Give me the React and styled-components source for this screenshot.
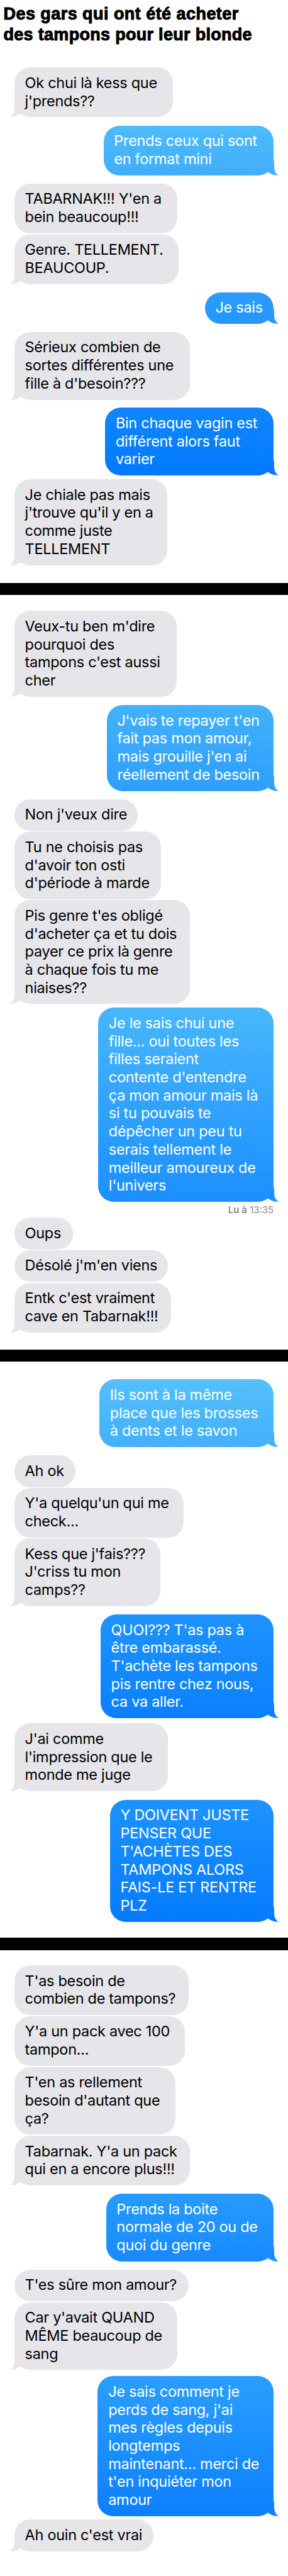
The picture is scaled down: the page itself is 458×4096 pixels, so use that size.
import React from "react";
import styled, { createGlobalStyle } from "styled-components";

const LINE = 28.7;
const PADDING_Y = 21.7;
const GREY = "#e5e5ea";

const conversations = [
  [
    { gap: 0, width: 252.4, tail: true, lines: ["Ok chui là kess que", "j'prends??"] },
    { gap: 13.2, width: 270.7, mine: ["#4dbbfc", "#41aefd"], lines: ["Prends ceux qui sont", "en format mini"] },
    { gap: 13.2, width: 259.7, lines: ["TABARNAK!!! Y'en a", "bein beaucoup!!!"] },
    { gap: 1.8, width: 261.1, tail: true, lines: ["Genre. TELLEMENT.", "BEAUCOUP."] },
    { gap: 13, width: 109.5, mine: ["#2b9dfd", "#2597fd"], lines: ["Je sais"] },
    { gap: 12.6, width: 279.5, tail: true, lines: ["Sérieux combien de", "sortes différentes une", "fille à d'besoin???"] },
    { gap: 12.8, width: 268.1, mine: ["#1186ff", "#027aff"], lines: ["Bin chaque vagin est", "différent alors faut", "varier"] },
    { gap: 5.8, width: 243.3, tail: true, lines: ["Je chiale pas mais", "j'trouve qu'il y en a", "comme juste", "TELLEMENT"] },
  ],
  [
    { gap: 24.9, width: 258.5, tail: true, lines: ["Veux-tu ben m'dire", "pourquoi des", "tampons c'est aussi", "cher"] },
    { gap: 13.3, width: 265.5, mine: ["#43b1fd", "#2d9ffd"], lines: ["J'vais te repayer t'en", "fait pas mon amour,", "mais grouille j'en ai", "réellement de besoin"] },
    { gap: 13.1, width: 196, lines: ["Non j'veux dire"] },
    { gap: 1.2, width: 233.4, lines: ["Tu ne choisis pas", "d'avoir ton osti", "d'période à marde"] },
    { gap: 1.2, width: 279.5, tail: true, lines: ["Pis genre t'es obligé", "d'acheter ça et tu dois", "payer ce prix là genre", "à chaque fois tu me", "niaises??"] },
    {
      gap: 6,
      width: 279.2,
      mine: ["#48b7fd", "#1b8fff"],
      read: "13:35",
      lines: [
        "Je le sais chui une",
        "fille... oui toutes les",
        "filles seraient",
        "contente d'entendre",
        "ça mon amour mais là",
        "si tu pouvais te",
        "dépêcher un peu tu",
        "serais tellement le",
        "meilleur amoureux de",
        "l'univers",
      ],
    },
    { gap: 0, width: 93.2, lines: ["Oups"] },
    { gap: 1.2, width: 244.2, lines: ["Désolé j'm'en viens"] },
    { gap: 1.3, width: 249.7, tail: true, lines: ["Entk c'est vraiment", "cave en Tabarnak!!!"] },
  ],
  [
    { gap: 28.7, width: 277.2, mine: ["#54c0fc", "#42b0fd"], lines: ["Ils sont à la même", "place que les brosses", "à dents et le savon"] },
    { gap: 13, width: 97.2, lines: ["Ah ok"] },
    { gap: 1.2, width: 269.3, lines: ["Y'a quelqu'un qui me", "check..."] },
    { gap: 1.3, width: 231.9, tail: true, lines: ["Kess que j'fais???", "J'criss tu mon", "camps??"] },
    { gap: 13, width: 275.4, mine: ["#1e93ff", "#0a80ff"], lines: ["QUOI??? T'as pas à", "être embarassé.", "T'achète les tampons", "pis rentre chez nous,", "ca va aller."] },
    { gap: 8.4, width: 244.2, tail: true, lines: ["J'ai comme", "l'impression que le", "monde me juge"] },
    { gap: 13.6, width: 260.5, mine: ["#1e93ff", "#047bff"], lines: ["Y DOIVENT JUSTE", "PENSER QUE", "T'ACHÈTES DES", "TAMPONS ALORS", "FAIS-LE ET RENTRE", "PLZ"] },
  ],
  [
    { gap: 24.4, width: 276.9, lines: ["T'as besoin de", "combien de tampons?"] },
    { gap: 1.8, width: 271.3, lines: ["Y'a un pack avec 100", "tampon..."] },
    { gap: 1.6, width: 256.7, lines: ["T'en as rellement", "besoin d'autant que", "ça?"] },
    { gap: 1.7, width: 279.5, tail: true, lines: ["Tabarnak. Y'a un pack", "qui en a encore plus!!!"] },
    { gap: 13, width: 266.7, mine: ["#279bfe", "#168aff"], lines: ["Prends la boite", "normale de 20 ou de", "quoi du genre"] },
    { gap: 12.9, width: 276.9, lines: ["T'es sûre mon amour?"] },
    { gap: 1.5, width: 259.7, tail: true, lines: ["Car y'avait QUAND", "MÊME beaucoup de", "sang"] },
    {
      gap: 9.8,
      width: 279.8,
      mine: ["#2b9eff", "#0c80ff"],
      lines: [
        "Je sais comment je",
        "perds de sang, j'ai",
        "mes règles depuis",
        "longtemps",
        "maintenant... merci de",
        "t'en inquiéter mon",
        "amour",
      ],
    },
    { gap: 5.5, width: 221.7, tail: true, lines: ["Ah ouin c'est vrai"] },
  ],
];

// white space above each divider, and its thickness
const dividers = [
  { space: 28.6, size: 19.3 },
  { space: 27.2, size: 18.8 },
  { space: 25.5, size: 19.3 },
];

const Message = ({ message, id }) => {
  const { gap, width, mine, tail, read, lines } = message;
  const height = PADDING_Y + lines.length * LINE;

  return (
    <>
      <Bubble $gap={gap} $width={width} $height={height} $mine={mine}>
        {lines.map(line => (
          <Line key={line}>{line}</Line>
        ))}
        {(tail || mine) && (
          <Tail viewBox="0 0 20 25" $mine={mine}>
            {mine && (
              <linearGradient
                id={id}
                gradientUnits="userSpaceOnUse"
                x1="0"
                x2="0"
                y1={25 - height}
                y2="25"
              >
                <stop offset="0" stopColor={mine[0]} />
                <stop offset="1" stopColor={mine[1]} />
              </linearGradient>
            )}
            <path
              d="M7 0V11C7 17 4.6 22 0 25C7 24.8 12.6 23.2 17 19.6Z"
              fill={mine ? `url(#${id})` : GREY}
            />
          </Tail>
        )}
      </Bubble>
      {read && (
        <Receipt>
          <b>Lu à</b> {read}
        </Receipt>
      )}
    </>
  );
};

const App = () => (
  <Page>
    <GlobalStyle />
    <Title>
      <TitleLine $spacing="0.45px">Des gars qui ont été acheter</TitleLine>
      <TitleLine $spacing="0.3px">des tampons pour leur blonde</TitleLine>
    </Title>
    {conversations.map((messages, i) => (
      <React.Fragment key={i}>
        <Thread>
          {messages.map((message, j) => (
            <Message key={j} id={`tail-${i}-${j}`} message={message} />
          ))}
        </Thread>
        {dividers[i] && (
          <Divider $space={dividers[i].space} $size={dividers[i].size} />
        )}
      </React.Fragment>
    ))}
  </Page>
);

const GlobalStyle = createGlobalStyle`
  body {
    margin: 0;
    background: #fff;
  }
`;

const Page = styled.main`
  box-sizing: border-box;
  width: 458px;
  height: 4096px;
  overflow: hidden;
  background: #fff;
  font-family: Inter, "Liberation Sans", sans-serif;
`;

const Title = styled.h1`
  box-sizing: border-box;
  height: 107.3px;
  margin: 0;
  padding: 6px 0 0 5.5px;
  font: bold 27px/33px "Liberation Sans", Arial, sans-serif;
  color: #000;
  -webkit-text-stroke: 1px #000;
`;

const TitleLine = styled.span`
  display: block;
  white-space: nowrap;
  letter-spacing: ${({ $spacing }) => $spacing};
`;

const Thread = styled.section`
  display: flex;
  flex-direction: column;
  padding: 0 22.8px;
`;

const Bubble = styled.div`
  position: relative;
  box-sizing: border-box;
  flex: none;
  align-self: ${({ $mine }) => ($mine ? "flex-end" : "flex-start")};
  width: ${({ $width }) => $width}px;
  height: ${({ $height }) => $height}px;
  margin-top: ${({ $gap }) => $gap}px;
  padding: 10.6px 0 0 16.8px;
  border-radius: 25px;
  background: ${({ $mine }) =>
    $mine ? `linear-gradient(${$mine[0]}, ${$mine[1]})` : GREY};
  color: ${({ $mine }) => ($mine ? "#fff" : "#000")};
`;

const Line = styled.div`
  height: ${LINE}px;
  font-size: 23.5px;
  line-height: ${LINE}px;
  letter-spacing: -0.3px;
  white-space: nowrap;
`;

const Tail = styled.svg`
  position: absolute;
  bottom: 0;
  width: 20px;
  height: 25px;
  ${({ $mine }) =>
    $mine ? "right: -7.3px; transform: scaleX(-1);" : "left: -7px;"}
`;

const Receipt = styled.div`
  height: 25.2px;
  box-sizing: border-box;
  padding-top: 4px;
  text-align: right;
  font-size: 15px;
  line-height: 18px;
  color: #8a8a8f;

  b {
    font-weight: 600;
  }
`;

const Divider = styled.hr`
  height: ${({ $size }) => $size}px;
  margin: ${({ $space }) => $space}px 0 0;
  border: 0;
  background: #000;
`;

export default App;
